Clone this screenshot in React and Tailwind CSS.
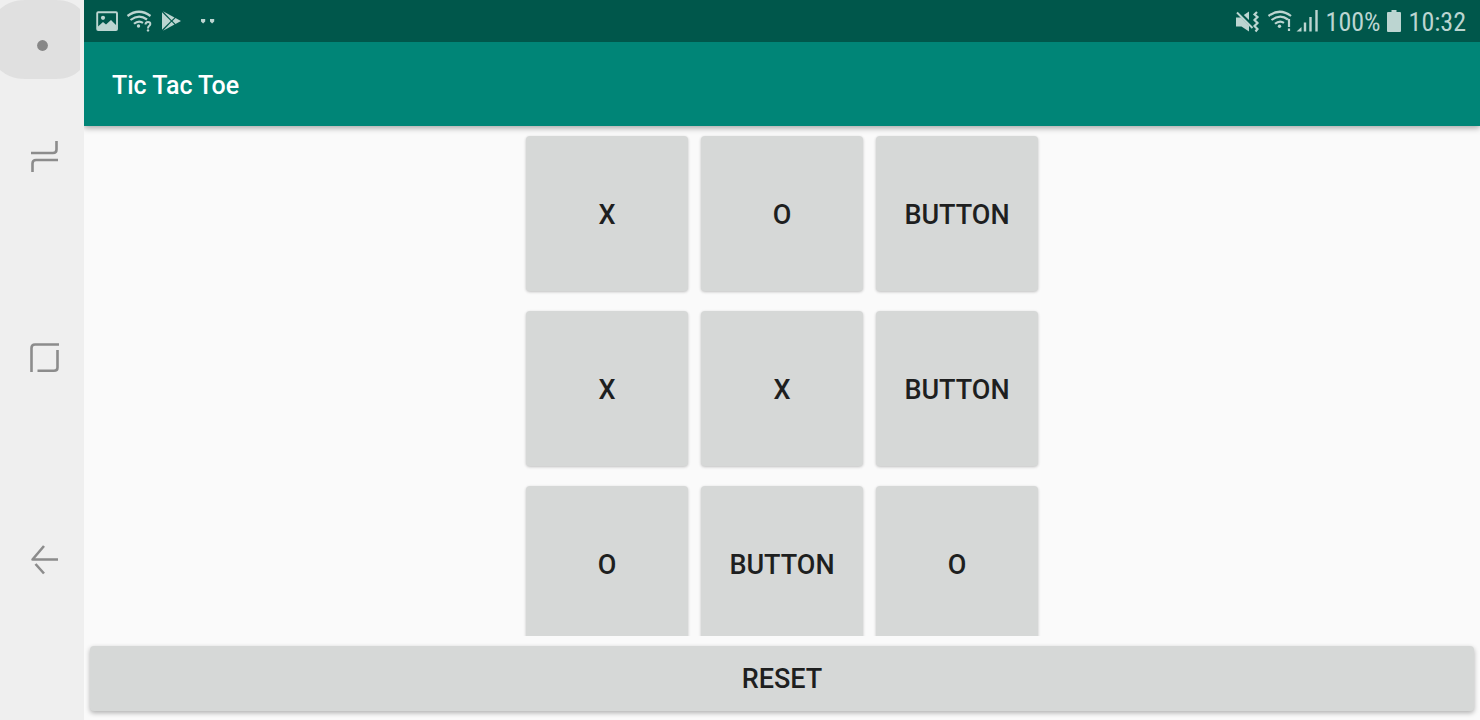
import { useState } from "react";

const START = ["X", "O", "", "X", "X", "", "O", "", "O"];

function NavButton({ label, children }) {
  return (
    <button type="button" aria-label={label} className="flex h-20 w-full items-center justify-center pl-1">
      <svg viewBox="0 0 40 40" className="h-10 w-10" fill="none" stroke="#8c8c8c" strokeWidth="2.6">
        {children}
      </svg>
    </button>
  );
}

function NavigationBar() {
  return (
    <nav className="z-20 flex w-[84px] shrink-0 flex-col bg-[#efefef]">
      <button type="button" aria-label="Toggle navigation bar" className="h-[79px] w-20">
        <svg viewBox="0 0 80 79" className="h-full w-full">
          <path d="M0 9C7 3 15 0 25 0H56C66 0 74 3 80 9V70C74 76 66 79 56 79H25C15 79 7 76 0 70Z" fill="#e0e0e0" />
          <circle cx="42.5" cy="45.5" r="5.4" fill="#878787" />
        </svg>
      </button>
      <div className="flex flex-1 flex-col justify-between pt-[37px] pb-[120px]">
        <NavButton label="Recent apps">
          <path d="M7 17H29Q32.5 17 32.5 13.500V5M34 24H12Q8.500 24 8.500 27.500V36" />
        </NavButton>
        <NavButton label="Home">
          <path d="M7.500 34V10Q7.500 6.500 11 6.500H35M33.500 12V29.500Q33.500 32.800 30 32.800H13.500" />
        </NavButton>
        <NavButton label="Back">
          <path d="M34 19.500H8.500L20 6M11.500 24L20 33.500" strokeLinejoin="round" />
        </NavButton>
      </div>
    </nav>
  );
}

function StatusBar() {
  return (
    <header className="z-20 flex h-[42px] shrink-0 items-center justify-between bg-[#00574b] pr-3.5 pl-3 text-[#bcd5d1]">
      <svg viewBox="96 0 122 42" className="h-[42px] w-[122px]" fill="none" stroke="currentColor" role="img" aria-label="Notifications">
        <rect x="97.200" y="12.200" width="19.800" height="17.800" rx="1" strokeWidth="1.900" />
        <circle cx="103" cy="17.800" r="2.100" fill="currentColor" stroke="none" />
        <path d="M98 26.500L103 22L106 24.500L111 20L116.500 25.500V30H98Z" fill="currentColor" stroke="none" />
        <path d="M127.500 16Q139 7.500 150.500 16M130.500 20Q139 13.500 147 19.500M134 23.800Q138.500 19.800 143 22.800" strokeWidth="2.200" />
        <circle cx="138.500" cy="26" r="1.700" fill="currentColor" stroke="none" />
        <path d="M145.500 24.500Q145.500 22 148 22Q150.500 22 150.300 24.200Q150.200 25.300 148.800 26.300Q148 27 148 28.500" strokeWidth="2" />
        <circle cx="148" cy="30.400" r="1.200" fill="currentColor" stroke="none" />
        <g fill="currentColor" stroke="none">
          <path d="M162 12.300L170.800 21L162 29.700Z" />
          <path d="M163 11.300L174.500 17.500L171.600 20.300Z" />
          <path d="M163 30.700L174.500 24.500L171.600 21.700Z" />
          <path d="M175.500 18L181 21L175.500 24L172.500 21Z" />
          <path d="M201 19h4.200v2.500l-2.100 2l-2.100-2ZM210 19h4.200v2.500l-2.100 2l-2.100-2Z" />
        </g>
      </svg>
      <div className="flex items-center font-['Roboto_Condensed','Liberation_Sans_Narrow',Roboto,sans-serif] text-[26px] leading-8">
        <svg viewBox="1235 0 84 42" className="h-[42px] w-[84px]" fill="none" stroke="currentColor" role="img" aria-label="Muted, Wi-Fi, signal">
          <path d="M1236 17.500H1241L1249 25.500V31.500L1241.500 26.500H1236ZM1243.800 15L1249 11.500V20Z" fill="currentColor" stroke="none" />
          <path d="M1237 12.500L1252.500 28" strokeWidth="2" />
          <path d="M1257 12L1254.500 14.500L1257.500 17L1254.500 20L1257.500 23L1254.500 26L1257.500 29L1255.500 31.500" strokeWidth="2.200" />
          <path d="M1268.500 16Q1280 7.500 1291 16M1271.500 20Q1280 13.500 1288 19.500M1275 23.800Q1279.500 19.800 1284 22.800" strokeWidth="2.200" />
          <circle cx="1279.500" cy="26.300" r="1.700" fill="currentColor" stroke="none" />
          <path d="M1289 19V27M1289 28.500V31" strokeWidth="2.200" />
          <path d="M1296.500 31.500L1301.500 27V31.500Z" fill="currentColor" stroke="none" />
          <path d="M1305 31.500V22.500M1310.500 31.500V17M1316.500 31.500V10" strokeWidth="2.400" />
        </svg>
        <span className="ml-[7px] pt-0.5">100%</span>
        <svg viewBox="0 0 14 22" className="mr-2 ml-1.5 h-[22px] w-3.5" fill="currentColor" role="img" aria-label="Battery full">
          <path d="M4.500 0H9.500V2H13Q14 2 14 3V21Q14 22 13 22H1Q0 22 0 21V3Q0 2 1 2H4.500Z" />
        </svg>
        <span className="pt-0.5">10:32</span>
      </div>
    </header>
  );
}

function PadButton({ children, className, ...rest }) {
  return (
    <button
      type="button"
      className={`rounded bg-[#d6d8d7] text-[27px] leading-8 font-medium text-[#1e1f1f] uppercase ${className}`}
      {...rest}
    >
      {children}
    </button>
  );
}

export default function App() {
  const [cells, setCells] = useState(START);

  const play = (index) => {
    if (cells[index]) return;
    const turn = cells.filter(Boolean).length % 2 === 0 ? "X" : "O";
    setCells(cells.map((cell, i) => (i === index ? turn : cell)));
  };

  return (
    <div className="flex h-screen bg-[#fafafa] font-[Roboto,sans-serif]">
      <NavigationBar />
      <div className="flex min-w-0 flex-1 flex-col">
        <StatusBar />
        <div className="z-10 flex h-[84px] shrink-0 items-center bg-[#008577] px-7 pt-1 shadow-[0_2px_6px_rgba(0,0,0,0.35)]">
          <h1 className="text-[25px] leading-8 font-medium text-white">Tic Tac Toe</h1>
        </div>
        <main className="flex min-h-0 flex-1 justify-center overflow-hidden pt-2.5">
          <div className="grid h-max grid-cols-[repeat(3,162px)] gap-x-[13px] gap-y-5">
            {cells.map((cell, i) => (
              <PadButton key={i} className="h-[155px] pt-[3px] shadow-[0_1px_3px_rgba(0,0,0,0.24)]" onClick={() => play(i)}>
                {cell || "Button"}
              </PadButton>
            ))}
          </div>
        </main>
        <footer className="flex shrink-0 px-1.5 pt-2.5 pb-[9px]">
          <PadButton
            className="h-[65px] flex-1 shadow-[0_2px_5px_rgba(0,0,0,0.3)]"
            onClick={() => setCells(Array(9).fill(""))}
          >
            Reset
          </PadButton>
        </footer>
      </div>
    </div>
  );
}
